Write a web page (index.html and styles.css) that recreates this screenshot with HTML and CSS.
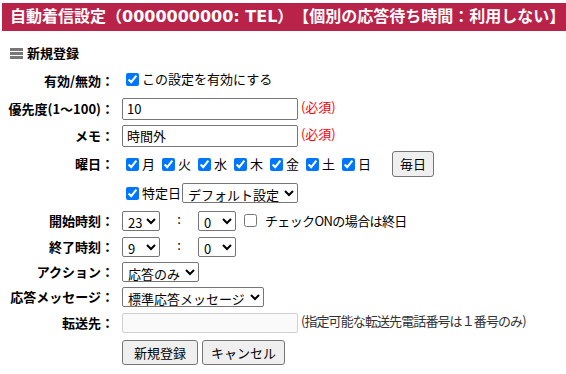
FILE: index.html
```html
<!DOCTYPE html>
<html lang="ja">
<head>
  <meta charset="UTF-8" />
  <title>自動着信設定</title>
  <link rel="stylesheet" href="styles.css">
</head>
<body>
  <h1 class="title">自動着信設定（0000000000: TEL）【個別の応答待ち時間：利用しない】</h1>
  <h2 class="section">
    <span class="section-icon"><i></i><i></i><i></i></span>
    新規登録
  </h2>
  <table class="form">
    <tr class="first">
      <th>有効/無効：</th>
      <td><label class="chk"><input type="checkbox" checked>この設定を有効にする</label></td>
    </tr>
    <tr class="tall">
      <th>優先度(1～100)：</th>
      <td><input type="text" class="text" value="10"> <span class="req">(必須)</span></td>
    </tr>
    <tr class="tall">
      <th>メモ：</th>
      <td><input type="text" class="text" value="時間外"> <span class="req">(必須)</span></td>
    </tr>
    <tr class="week">
      <th>曜日：</th>
      <td>
        <div class="days">
          <label class="chk"><input type="checkbox" checked>月</label>
          <label class="chk"><input type="checkbox" checked>火</label>
          <label class="chk"><input type="checkbox" checked>水</label>
          <label class="chk"><input type="checkbox" checked>木</label>
          <label class="chk"><input type="checkbox" checked>金</label>
          <label class="chk"><input type="checkbox" checked>土</label>
          <label class="chk"><input type="checkbox" checked>日</label>
          <button type="button" class="btn everyday">毎日</button>
        </div>
        <div class="special">
          <label class="chk"><input type="checkbox" checked>特定日</label>
          <select><option>デフォルト設定</option></select>
        </div>
      </td>
    </tr>
    <tr>
      <th>開始時刻：</th>
      <td>
        <select class="num"><option>23</option></select><span class="colon">:</span><select class="num"><option>0</option></select>
        <label class="chk allday"><input type="checkbox">チェックONの場合は終日</label>
      </td>
    </tr>
    <tr>
      <th>終了時刻：</th>
      <td>
        <select class="num"><option>9</option></select><span class="colon">:</span><select class="num"><option>0</option></select>
      </td>
    </tr>
    <tr class="short">
      <th>アクション：</th>
      <td><select><option>応答のみ</option></select></td>
    </tr>
    <tr class="short">
      <th>応答メッセージ：</th>
      <td><select><option>標準応答メッセージ</option></select></td>
    </tr>
    <tr>
      <th>転送先：</th>
      <td><input type="text" class="text" disabled> <span class="note">(指定可能な転送先電話番号は１番号のみ)</span></td>
    </tr>
    <tr class="buttons">
      <th></th>
      <td>
        <button type="button" class="btn">新規登録</button>
        <button type="button" class="btn cancel">キャンセル</button>
      </td>
    </tr>
  </table>
</body>
</html>
```

FILE: styles.css
```css
body {
  margin: 0;
  padding: 3px 0 0 2px;
  font-family: "Noto Sans CJK JP", "Noto Sans", sans-serif;
  font-size: 13px;
  color: #000;
  background: #fff;
}
.title {
  margin: 0;
  background: #b9234a;
  color: #fff;
  font-family: "DejaVu Sans", "Noto Sans CJK JP", sans-serif;
  font-size: 16px;
  font-weight: bold;
  line-height: 28px;
  padding: 0 0 0 8px;
  white-space: nowrap;
  overflow: hidden;
  text-spacing-trim: space-all;
}
.section {
  margin: 12px 0 5px 8px;
  font-size: 13px;
  font-weight: bold;
  display: flex;
  align-items: center;
  gap: 4px;
  line-height: 20px;
}
.section-icon {
  display: flex;
  flex-direction: column;
  gap: 1px;
  width: 13px;
}
.section-icon i {
  display: block;
  height: 3px;
  background: #777;
}
.form {
  border-collapse: collapse;
}
.form th {
  text-align: right;
  font-weight: bold;
  white-space: nowrap;
  padding: 0 8px 0 6px;
  width: 106px;
  vertical-align: middle;
}
.form td {
  padding: 0;
  height: 26px;
  line-height: 20px;
  white-space: nowrap;
}
.form tr.first td,
.form tr.first th {
  height: 24px;
  padding-bottom: 3px;
}
.form tr.tall td {
  height: 27px;
}
.form tr.short td {
  height: 25px;
}
.form tr.week td {
  height: auto;
  padding: 2px 0 4px;
}
.form tr.week th {
  vertical-align: top;
  padding-top: 2px;
  line-height: 26px;
}
.form tr.buttons td {
  height: 30px;
  vertical-align: bottom;
}
.chk {
  display: inline-flex;
  align-items: center;
}
.chk input {
  margin: 3px 3px 3px 4px;
  width: 13px;
  height: 13px;
}
.text {
  width: 176px;
  height: 22px;
  box-sizing: border-box;
  border: 1px solid #767676;
  border-radius: 2px;
  font: inherit;
  padding: 0 4px;
  vertical-align: middle;
}
.text:disabled {
  height: 20px;
  background: #fafafa;
  border-color: #d0d0d0;
}
.req {
  color: #f00;
}
.note {
  color: #333;
  letter-spacing: -0.9px;
}
.days {
  display: flex;
  align-items: center;
  gap: 3px;
}
.days .everyday {
  margin-left: 18px;
  padding: 0 7px;
}
.special {
  display: flex;
  align-items: center;
  gap: 1px;
  margin-top: 6px;
}
select {
  font: inherit;
  height: 20px;
  border: 1px solid #767676;
  border-radius: 2px;
  background: #fff;
  padding: 0 1px;
  vertical-align: middle;
}
select.num {
  width: 38px;
}
.colon {
  display: inline-block;
  width: 38px;
  text-align: center;
}
.allday {
  margin-left: 1px;
  vertical-align: middle;
  letter-spacing: -0.6px;
}
.allday input {
  margin-right: 8px;
}
.btn {
  font: inherit;
  background: #efefef;
  border: 1px solid #767676;
  border-radius: 3px;
  padding: 0 11px;
  height: 25px;
}
.days .btn {
  height: 26px;
}
.buttons .btn + .btn {
  margin-left: 1px;
}
.buttons .cancel {
  padding: 0 8px;
}
```
